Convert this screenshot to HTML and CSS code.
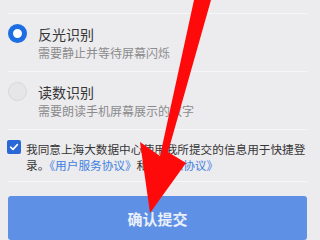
FILE: index.html
```html
<!DOCTYPE html>
<html>
<head>
<meta charset="utf-8">
<link rel="stylesheet" href="styles.css">
</head>
<body>
<div class="page">
  <div class="top-gap"></div>
  <div class="divider"></div>
  <div class="option">
    <span class="radio radio-on"></span>
    <div class="option-text">
      <div class="option-title">反光识别</div>
      <div class="option-sub">需要静止并等待屏幕闪烁</div>
    </div>
  </div>
  <div class="divider"></div>
  <div class="option">
    <span class="radio radio-off"></span>
    <div class="option-text">
      <div class="option-title">读数识别</div>
      <div class="option-sub">需要朗读手机屏幕展示的数字</div>
    </div>
  </div>
  <div class="divider"></div>
  <div class="agree">
    <span class="checkbox">
      <svg width="14" height="14" viewBox="0 0 14 14"><path d="M3.6 7.2 L6 9.4 L10.4 4.6" fill="none" stroke="#fff" stroke-width="1.6" stroke-linecap="round" stroke-linejoin="round"/></svg>
    </span>
    <p class="agree-text">我同意上海大数据中心使用我所提交的信息用于快捷登<br>录。<span class="link">《用户服务协议》</span>和<span class="link">《隐私协议》</span></p>
  </div>
  <div class="divider"></div>
  <button class="submit">确认提交</button>
</div>
<svg class="arrow" width="320" height="240" viewBox="0 0 320 240">
  <polygon points="194,0 211,0 168,152 186,163 150,213 140,142 160,156" fill="#ff0a0a"/>
</svg>
</body>
</html>
```
FILE: styles.css
```css
html, body {
  margin: 0;
  padding: 0;
  background: #ecebee;
}
body {
  width: 320px;
  height: 240px;
  overflow: hidden;
  position: relative;
  font-family: "Noto Sans CJK SC", "Noto Sans", sans-serif;
}
.page {
  padding: 0 13px 0 8px;
  display: flex;
  flex-direction: column;
}
.top-gap {
  height: 13px;
}
.divider {
  height: 1px;
  background: #f6f5f7;
}
.option {
  display: flex;
  align-items: flex-start;
  gap: 11px;
  padding: 10px 0 9px 0;
}
.radio {
  box-sizing: border-box;
  width: 19px;
  height: 19px;
  border-radius: 50%;
  flex: none;
}
.radio-on {
  border: 5.5px solid #1c6ee2;
  background: #ffffff;
}
.radio-off {
  border: 1px solid #d8d7db;
  background: #e6e5e8;
}
.option-text {
  display: flex;
  flex-direction: column;
}
.option-title {
  font-size: 14px;
  line-height: 20px;
  color: #363636;
}
.option-sub {
  font-size: 12px;
  line-height: 18px;
  color: #8b8b8d;
}
.agree {
  display: flex;
  align-items: flex-start;
  gap: 5px;
  padding: 11px 0 8px 0;
}
.checkbox {
  width: 14px;
  height: 14px;
  margin: -1px 0 0 -1px;
  border-radius: 2px;
  background: #2a68d6;
  flex: none;
  display: flex;
}
.agree-text {
  margin: 0;
  font-size: 11.65px;
  line-height: 16px;
  color: #363636;
  white-space: nowrap;
}
.link {
  color: #3f7fe0;
}
.submit {
  margin-top: 14px;
  height: 44px;
  border: none;
  border-radius: 3px;
  background: #5e90e5;
  color: #e9effb;
  font-family: "Noto Sans CJK SC", "Noto Sans", sans-serif;
  font-size: 15px;
  font-weight: bold;
  padding: 0;
}
.arrow {
  position: absolute;
  left: 0;
  top: 0;
}
```
